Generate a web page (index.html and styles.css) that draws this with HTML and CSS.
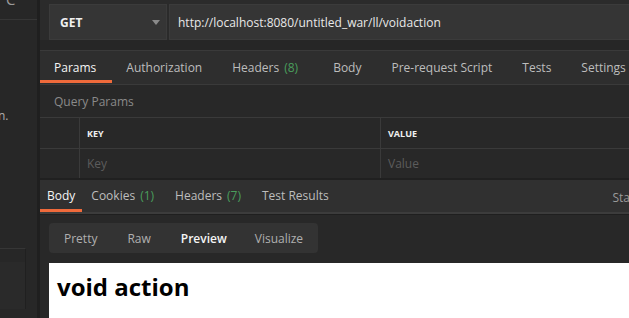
FILE: index.html
```html
<!DOCTYPE html>
<html lang="en">

<head>
    <meta charset="UTF-8">
    <title>Postman - voidaction</title>
    <link rel="stylesheet" href="styles.css">
</head>

<body>
    <div class="sidebar">
        <div class="side-top"><span class="side-glyph">C</span></div>
        <div class="side-text">n.</div>
        <div class="side-bottom"></div>
    </div>

    <div class="main">
        <div class="request-bar">
            <div class="method">
                <span>GET</span>
                <span class="caret"></span>
            </div>
            <div class="url">http://localhost:8080/untitled_war/ll/voidaction</div>
        </div>

        <div class="tabs">
            <div class="tab active">Params</div>
            <div class="tab">Authorization</div>
            <div class="tab">Headers <span class="count">(8)</span></div>
            <div class="tab">Body</div>
            <div class="tab">Pre-request Script</div>
            <div class="tab">Tests</div>
            <div class="tab">Settings</div>
        </div>

        <div class="section-title">Query Params</div>

        <div class="params-table">
            <div class="row head">
                <div class="cell check"></div>
                <div class="cell key">KEY</div>
                <div class="cell value">VALUE</div>
            </div>
            <div class="row">
                <div class="cell check"></div>
                <div class="cell key placeholder">Key</div>
                <div class="cell value placeholder">Value</div>
            </div>
        </div>

        <div class="resp-tabs">
            <div class="rtab active">Body</div>
            <div class="rtab">Cookies <span class="count">(1)</span></div>
            <div class="rtab">Headers <span class="count">(7)</span></div>
            <div class="rtab">Test Results</div>
            <div class="status">Sta</div>
        </div>

        <div class="response">
            <div class="view-toggle">
                <div class="view">Pretty</div>
                <div class="view">Raw</div>
                <div class="view selected">Preview</div>
                <div class="view">Visualize</div>
            </div>
            <div class="preview">
                <h1>void action</h1>
            </div>
        </div>
    </div>
</body>

</html>
```

FILE: styles.css
```css
body {
    font-family: "Open Sans", "Noto Sans", sans-serif;
    font-size: 12px;
    background-color: #282828;
    color: #d0d0d0;
    margin: 0;
    display: flex;
    height: 318px;
    overflow: hidden;
}

.sidebar {
    width: 37px;
    flex-shrink: 0;
    background: #272727;
    border-right: 3px solid #1f1f1f;
    display: flex;
    flex-direction: column;
}

.sidebar > div {
    flex-shrink: 0;
}

.side-top {
    height: 19px;
    border-bottom: 1px solid #363636;
    overflow: hidden;
}

.side-glyph {
    display: block;
    margin: -11px 0 0 6px;
    font-size: 15px;
    color: #9a9a9a;
}

.side-text {
    margin-top: 87px;
    color: #b0b0b0;
    font-size: 12px;
    margin-left: -2px;
}

.side-bottom {
    margin-top: 124px;
    width: 25px;
    height: 60px;
    border-top: 1px solid #363636;
    background: #2a2a2a;
    border-right: 1px solid #202020;
    box-shadow: inset 0 13px 0 #272727;
}

.main {
    flex: 1;
    min-width: 0;
    display: flex;
    flex-direction: column;
}

.main > div {
    flex-shrink: 0;
}

.request-bar {
    height: 36px;
    padding: 4px 0 0 9px;
    background: #2b2b2b;
    border-bottom: 10px solid #262626;
    display: flex;
    gap: 2px;
}

.method {
    width: 100px;
    padding: 0 6px 0 10px;
    background: #353535;
    border: 1px solid #3b3b3b;
    display: flex;
    align-items: center;
    justify-content: space-between;
    color: #f0f0f0;
    font-weight: bold;
    font-size: 12px;
}

.caret {
    width: 0;
    height: 0;
    border-left: 4px solid transparent;
    border-right: 4px solid transparent;
    border-top: 5px solid #8a8a8a;
}

.url {
    flex: 1;
    background: #353535;
    border: 1px solid #3b3b3b;
    border-right: none;
    display: flex;
    align-items: center;
    padding-left: 8px;
    color: #e8e8e8;
    white-space: nowrap;
}

.tabs {
    display: flex;
    height: 33px;
    background: #2e2e2e;
    border-top: 1px solid #3a3a3a;
    border-bottom: 1px solid #3a3a3a;
    white-space: nowrap;
}

.tab {
    padding: 3px 16px 0 14px;
    display: flex;
    align-items: center;
    gap: 5px;
    color: #bdbdbd;
    border-bottom: 3px solid transparent;
    margin-bottom: 1px;
}

.tab .count {
    margin-right: 5px;
}

.tab.active {
    color: #f5f5f5;
    border-bottom-color: #ef6a3b;
}

.count {
    color: #4a9e5c;
}

.section-title {
    height: 32px;
    line-height: 33px;
    padding-left: 14px;
    color: #8a8a8a;
}

.params-table {
    border-top: 1px solid #3a3a3a;
    border-bottom: 2px solid #202020;
}

.row {
    display: flex;
    height: 30px;
    border-bottom: 1px solid #3a3a3a;
}

.row:last-child {
    height: 29px;
    border-bottom: none;
}

.cell {
    display: flex;
    align-items: center;
    padding-left: 7px;
}

.check {
    width: 32px;
    border-right: 1px solid #3a3a3a;
}

.key {
    width: 293px;
    border-right: 1px solid #3a3a3a;
}

.value {
    flex: 1;
}

.head .cell {
    font-size: 9px;
    font-weight: bold;
    color: #f0f0f0;
}

.placeholder {
    color: #5c5c5c;
}

.resp-tabs {
    display: flex;
    height: 32px;
    background: #303030;
    border-bottom: 2px solid #3c3c3c;
    white-space: nowrap;
}

.rtab {
    padding: 2px 13px 0 8px;
    display: flex;
    align-items: center;
    gap: 5px;
    color: #bdbdbd;
    border-bottom: 3px solid transparent;
}

.rtab.active {
    padding: 2px 7px 0 7px;
    color: #f5f5f5;
    border-bottom-color: #ef6a3b;
    margin-right: 1px;
}

.status {
    margin-left: auto;
    display: flex;
    align-items: center;
    padding-top: 2px;
    color: #9a9a9a;
    margin-right: -1px;
}

.response {
    padding: 8px 0 0 9px;
    border-top: 1px solid #1f1f1f;
}

.view-toggle {
    display: inline-flex;
    height: 30px;
    background: #333333;
    border-radius: 4px;
}

.view {
    padding: 0 15px;
    display: flex;
    align-items: center;
    color: #b0b0b0;
}

.view.selected {
    padding-right: 13px;
    color: #f5f5f5;
    font-weight: 600;
}

.preview {
    margin-top: 10px;
    background: #ffffff;
    height: 55px;
    padding-left: 8px;
}

.preview h1 {
    margin: 0;
    padding-top: 8px;
    font-size: 24px;
    line-height: 32px;
    color: #000;
}
```
